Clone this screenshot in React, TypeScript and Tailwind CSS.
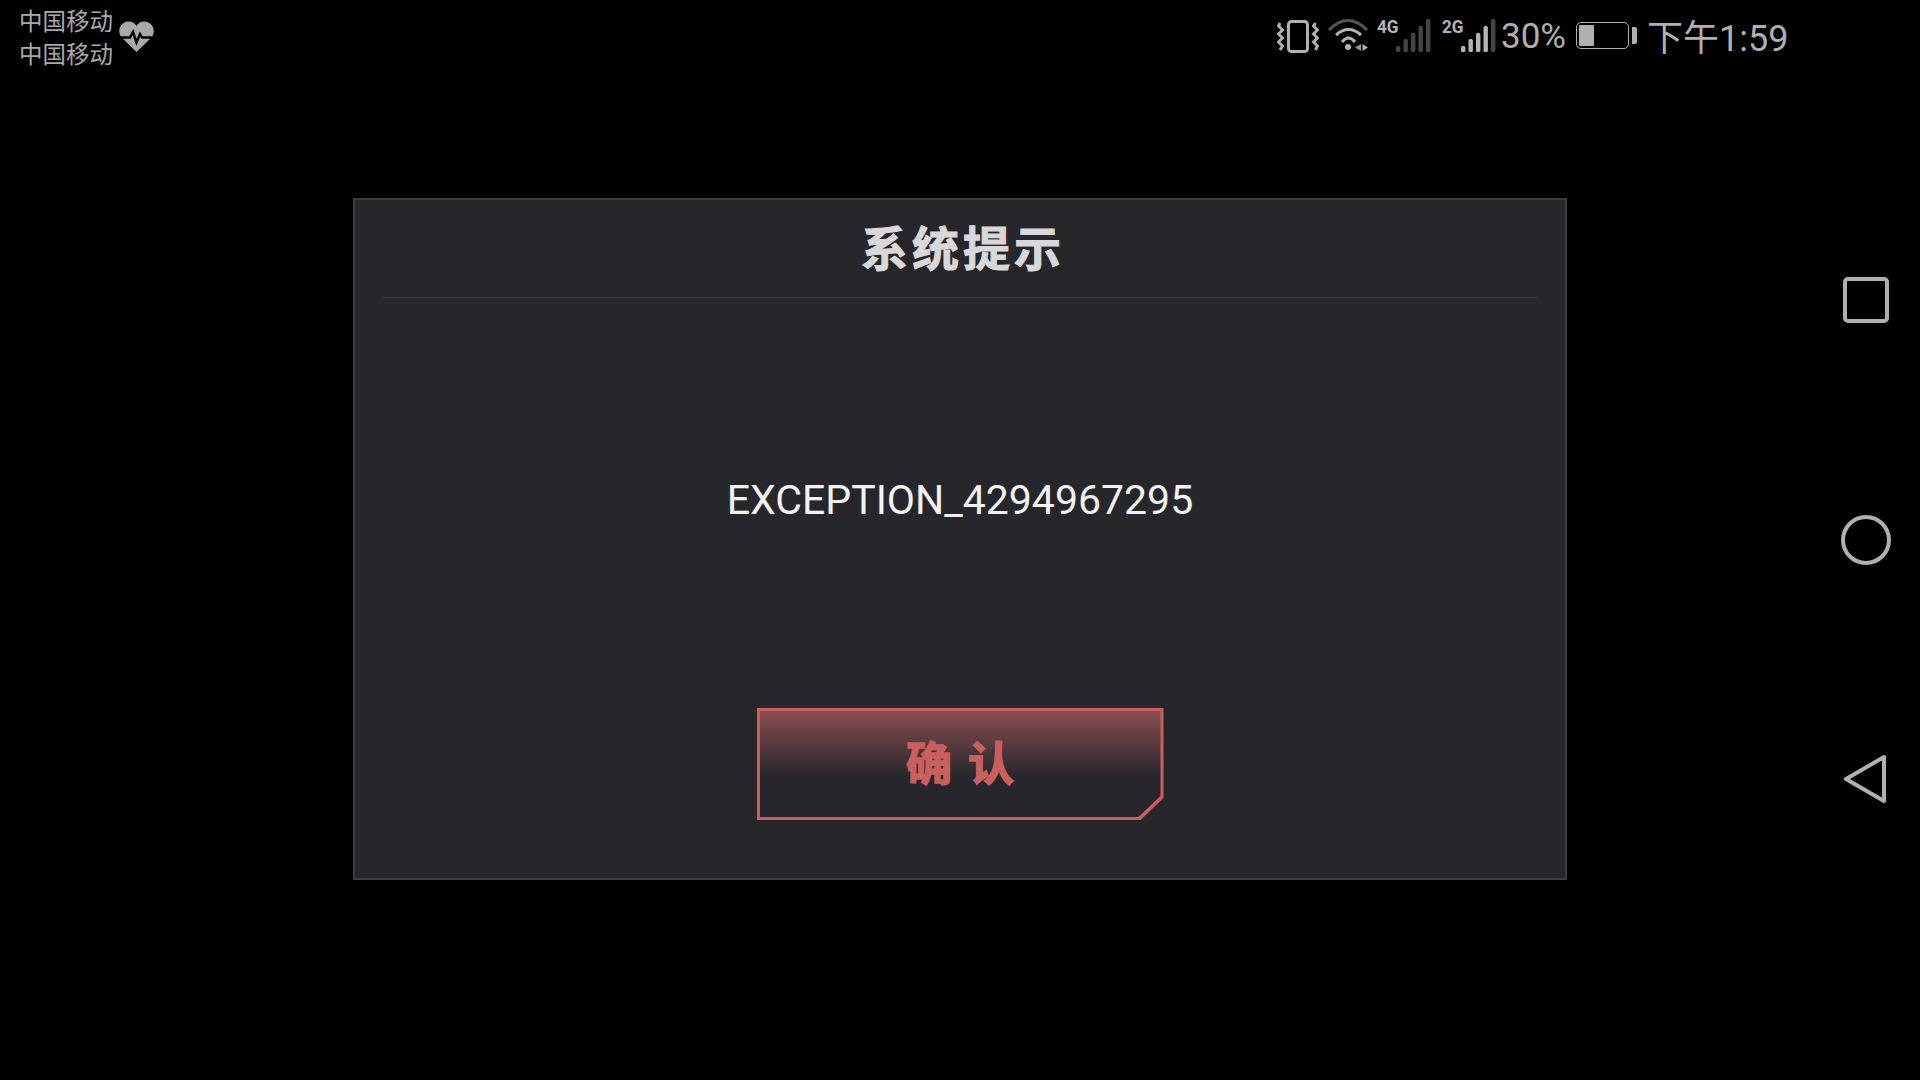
import React from 'react';

const bars4g = ['#454545', '#454545', '#454545', '#454545', '#454545'];
const bars2g = ['#b4b4b4', '#b4b4b4', '#b4b4b4', '#b4b4b4', '#454545'];

function Signal({ colors }: { colors: string[] }) {
  const heights = [6, 13, 19, 26, 33];
  return (
    <svg width="35" height="33" viewBox="0 0 35 33">
      {heights.map((h, i) => (
        <rect key={i} x={i * 7.5} y={33 - h} width="4.4" height={h} rx="1.5" fill={colors[i]} />
      ))}
    </svg>
  );
}

function NetLabel({ label, children }: { label: string; children: React.ReactNode }) {
  return (
    <div className="flex items-end h-[33px]">
      <span className="self-start -mt-[2px] w-[19px] text-[19px] leading-[20px] font-bold text-[#b4b4b4] [font-family:Roboto,sans-serif] scale-x-[0.9] origin-left">
        {label}
      </span>
      {children}
    </div>
  );
}

function StatusBar() {
  return (
    <div className="h-[72px] flex justify-between pl-[19px] pr-[15px] text-[#b0b0b0] [font-family:Roboto,'Noto_Sans_CJK_SC',sans-serif]">
      <div className="flex">
        <div className="flex flex-col pt-[4px] text-[23.5px] leading-[33px] text-[#a9a9a9] [font-family:'Noto_Sans_CJK_SC',sans-serif]">
          <span>中国移动</span>
          <span>中国移动</span>
        </div>
        <svg className="ml-[6px] mt-[21px]" width="35" height="31" viewBox="0 0 35 31">
          <path d="M17.5 31 L3 17 C-1 12.500 -0.500 5.500 4 2.500 C9 -1 15 0.500 17.500 5 C20 0.500 26 -1 31 2.500 C35.500 5.500 36 12.500 32 17 Z" fill="#a9a9a9" />
          <path d="M0 16.500 H11 L14 11 L17.500 21.500 L21 13 L23 16.500 H35" fill="none" stroke="#000" strokeWidth="2.500" />
        </svg>
      </div>
      <div className="flex pt-[19px] h-full">
        <svg className="mt-[1px] w-[42px] shrink-0" width="42" height="33" viewBox="0 0 42 33" fill="none" stroke="#b0b0b0">
          <rect x="11.500" y="1.500" width="19" height="30" rx="3" strokeWidth="3" />
          <path d="M3 3 L1.500 6 L5.500 10 L1.500 14 L5.500 18 L1.500 22 L5.500 26 L3 30" strokeWidth="3" />
          <path d="M38.500 3 L36.500 6 L40.500 10 L36.500 14 L40.500 18 L36.500 22 L40.500 26 L38.500 30" strokeWidth="3" />
        </svg>
        <svg className="ml-[9px] shrink-0" width="40" height="33" viewBox="0 0 40 33" fill="none">
          <path d="M1 11 Q20 -8 39 11" stroke="#555" strokeWidth="3" />
          <path d="M8 16 Q20.500 5 33 16" stroke="#b4b4b4" strokeWidth="3" />
          <path d="M14 23 Q20.500 15 27 23" stroke="#b4b4b4" strokeWidth="3" />
          <circle cx="20" cy="28" r="3" fill="#b4b4b4" />
          <path d="M33 25 V32 L27 28.500 Z" fill="#999" />
          <path d="M34.500 25 V32 L40 28.500 Z" fill="#b4b4b4" />
        </svg>
        <div className="ml-[9px]">
          <NetLabel label="4G">
            <Signal colors={bars4g} />
          </NetLabel>
        </div>
        <div className="ml-[11px]">
          <NetLabel label="2G">
            <Signal colors={bars2g} />
          </NetLabel>
        </div>
        <span className="ml-[6px] w-[64px] -mt-[1px] -translate-x-[1px] text-[35px] leading-[38px]">30%</span>
        <div className="ml-[10px] mt-[3px] flex items-center h-[27px]">
          <div className="w-[53px] h-[27px] border border-[#b0b0b0] rounded-[5px] p-[2px]">
            <div className="w-[15px] h-full bg-[#b0b0b0] rounded-[1px]" />
          </div>
          <div className="ml-[3px] w-[5px] h-[17px] bg-[#b0b0b0] rounded-r-[2px]" />
        </div>
        <span className="ml-[10px] w-[138px] text-[36px] leading-[40px] whitespace-nowrap">下午1:59</span>
      </div>
    </div>
  );
}

function Dialog() {
  return (
    <div className="ml-[353px] mt-[126px] w-[1214px] h-[682px] bg-[#27272b] border-2 border-[#3c3c40] flex flex-col">
      <div className="mx-[28px] h-[98px] border-b border-[#3a3a3e] flex items-center justify-center shrink-0">
        <h1 className="-mt-[7px] pl-[6px] text-[47px] leading-none font-bold tracking-[4px] text-[#d8d8da] [font-family:'Noto_Sans_CJK_SC',sans-serif] [-webkit-text-stroke:1px_#d8d8da]">
          系统提示
        </h1>
      </div>
      <div className="flex-1 flex items-center justify-center pb-[4px] text-[41px] text-[#f2f2f2] [font-family:Roboto,sans-serif]">
        EXCEPTION_4294967295
      </div>
      <div className="flex justify-center pb-[58px]">
        <button className="w-[407px] h-[112px] bg-[#c9605f] p-[3px] [clip-path:polygon(0_0,100%_0,100%_calc(100%-22px),calc(100%-23px)_100%,0_100%)]">
          <div className="w-full h-full flex items-center justify-center pb-[8px] bg-gradient-to-b from-[#8a4d50] to-[#27272b] to-[62%] text-[46px] leading-none font-bold tracking-[16px] pl-[16px] text-[#c9605f] [font-family:'Noto_Sans_CJK_SC',sans-serif] [-webkit-text-stroke:1.5px_#c9605f] [clip-path:polygon(0_0,100%_0,100%_calc(100%-21px),calc(100%-22px)_100%,0_100%)]">
            确认
          </div>
        </button>
      </div>
    </div>
  );
}

function NavButtons() {
  return (
    <div className="w-[120px] pl-[41px] pt-[276px] flex flex-col gap-[189px]">
      <svg width="50" height="50" viewBox="0 0 50 50" fill="none" stroke="#b0b0b0" strokeWidth="4">
        <rect x="4" y="3" width="42" height="42" rx="3" />
      </svg>
      <svg width="50" height="50" viewBox="0 0 50 50" fill="none" stroke="#b0b0b0" strokeWidth="4">
        <circle cx="25" cy="25" r="23" />
      </svg>
      <svg width="50" height="50" viewBox="0 0 50 50" fill="none" stroke="#b0b0b0" strokeWidth="4" strokeLinejoin="round">
        <path d="M43 3 V47 L5 25 Z" />
      </svg>
    </div>
  );
}

export default function App() {
  return (
    <div className="w-[1920px] h-[1080px] bg-black flex overflow-hidden">
      <div className="w-[1800px] flex flex-col">
        <StatusBar />
        <Dialog />
      </div>
      <NavButtons />
    </div>
  );
}
